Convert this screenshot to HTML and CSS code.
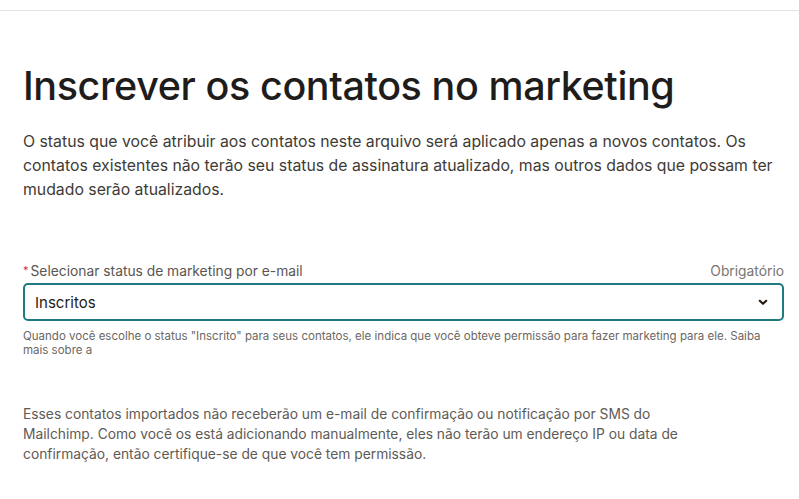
FILE: index.html
```html
<!DOCTYPE html>
<html lang="pt-BR">
<head>
<meta charset="utf-8">
<link rel="stylesheet" href="styles.css">
</head>
<body>
<div class="topbar"></div>
<main class="page">
  <h1 class="title">Inscrever os contatos no marketing</h1>
  <p class="intro">O status que você atribuir aos contatos neste arquivo será aplicado apenas a novos contatos. Os contatos existentes não terão seu status de assinatura atualizado, mas outros dados que possam ter mudado serão atualizados.</p>
  <div class="field">
    <div class="field-head">
      <label class="label"><span class="req">*</span>Selecionar status de marketing por e-mail</label>
      <span class="optional">Obrigatório</span>
    </div>
    <div class="select">
      <span class="select-value">Inscritos</span>
      <svg class="chev" width="10" height="7" viewBox="0 0 10 7"><path d="M1.8 1.8 L5 4.8 L8.2 1.8" fill="none" stroke="#241c15" stroke-width="2.2" stroke-linecap="round" stroke-linejoin="round"/></svg>
    </div>
    <p class="help">Quando você escolhe o status "Inscrito" para seus contatos, ele indica que você obteve permissão para fazer marketing para ele. Saiba mais sobre a</p>
  </div>
  <p class="note">Esses contatos importados não receberão um e-mail de confirmação ou notificação por SMS do Mailchimp. Como você os está adicionando manualmente, eles não terão um endereço IP ou data de confirmação, então certifique-se de que você tem permissão.</p>
</main>
</body>
</html>
```
FILE: styles.css
```css
html, body {
  margin: 0;
  padding: 0;
  background: #fff;
}
body {
  font-family: Inter, "Liberation Sans", Arial, sans-serif;
  color: #241c15;
}
.topbar {
  height: 10px;
  border-bottom: 1px solid #e4e4e4;
}
.page {
  padding: 0 15px 0 23px;
}
.title {
  margin: 49px 0 0;
  font-size: 39.5px;
  font-weight: 500;
  line-height: 52px;
  color: #1f1d1b;
  letter-spacing: -0.4px;
}
.intro {
  margin: 18px 0 0;
  font-size: 15.8px;
  line-height: 24px;
  color: #403b36;
  max-width: 760px;
}
.field {
  margin-top: 58px;
}
.field-head {
  display: flex;
  justify-content: space-between;
  align-items: baseline;
  font-size: 13.8px;
  line-height: 20px;
  color: #595551;
}
.req {
  color: #d33;
  font-size: 11px;
  margin-right: 2px;
  vertical-align: 2px;
}
.optional {
  color: #797572;
}
.select {
  margin-top: 2px;
  height: 34px;
  border: 2px solid #1f7a80;
  border-radius: 5px;
  display: flex;
  align-items: center;
  justify-content: space-between;
  padding: 0 14px 0 10px;
  font-size: 15px;
  color: #241c15;
}
.help {
  margin: 8px 0 0;
  font-size: 11.5px;
  line-height: 14px;
  color: #6b6764;
  max-width: 740px;
}
.note {
  margin: 47px 0 0;
  font-size: 13.8px;
  line-height: 20px;
  color: #5e5a56;
  max-width: 690px;
}
```
